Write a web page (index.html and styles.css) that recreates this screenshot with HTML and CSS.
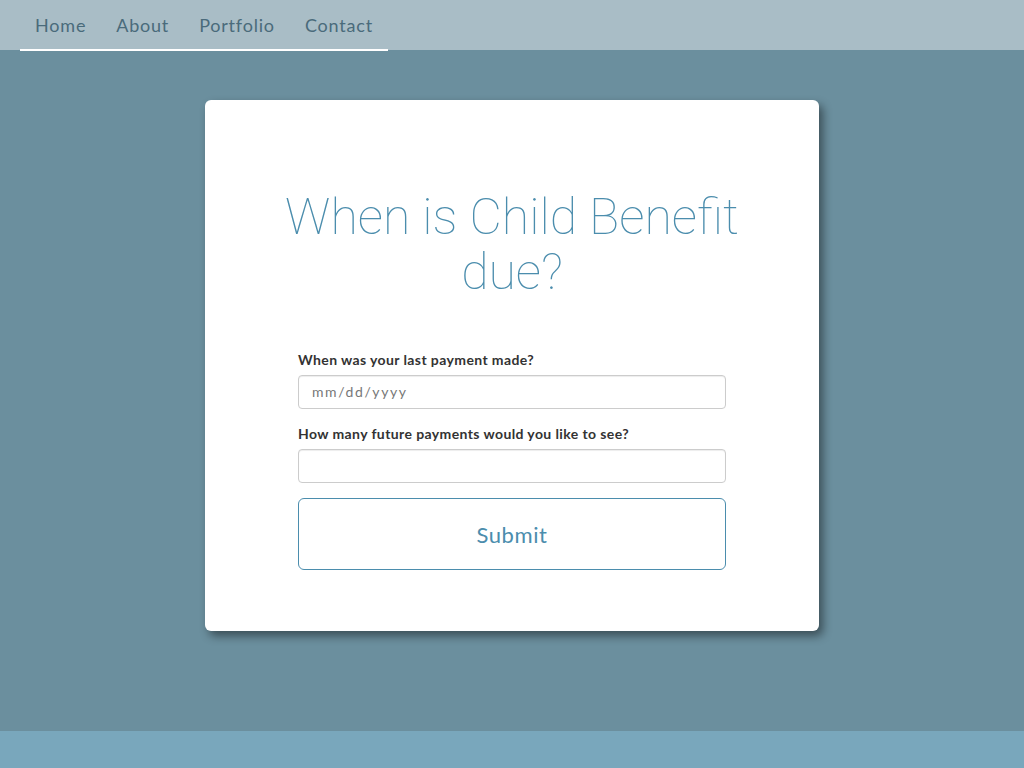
FILE: index.html
```html
<!DOCTYPE html>
<html lang="en">
<head>
<meta charset="utf-8">
<title>Child Benefit</title>
<link rel="stylesheet" href="styles.css">
</head>
<body>
<nav class="topnav">
  <ul class="nav-list">
    <li><a href="#">Home</a></li>
    <li><a href="#">About</a></li>
    <li><a href="#">Portfolio</a></li>
    <li><a href="#">Contact</a></li>
  </ul>
</nav>
<main class="main">
  <section class="card">
    <h1 class="title">When is Child Benefit due?</h1>
    <form class="form">
      <div class="form-group">
        <label class="label" for="last">When was your last payment made?</label>
        <div class="input date-input" id="last">mm/dd/yyyy</div>
      </div>
      <div class="form-group">
        <label class="label" for="count">How many future payments would you like to see?</label>
        <input class="input" id="count" type="text">
      </div>
      <button class="submit" type="button">Submit</button>
    </form>
  </section>
</main>
<footer class="footer"></footer>
</body>
</html>
```

FILE: styles.css
```css
* { box-sizing: border-box; }
html, body { margin: 0; padding: 0; }
body {
  background: #6b8f9e;
  font-family: "Lato", "Open Sans", sans-serif;
  color: #333;
  min-height: 768px;
  display: flex;
  flex-direction: column;
}
.topnav {
  height: 50px;
  background: #a9bdc6;
  padding-left: 20px;
}
.nav-list {
  list-style: none;
  margin: 0;
  padding: 0;
  display: inline-flex;
  border-bottom: 2px solid #ffffff;
  height: 51px;
}
.nav-list a {
  display: block;
  padding: 14px 15px;
  font-size: 18px;
  line-height: 22px;
  font-weight: 400;
  color: #4a6b7b;
  text-decoration: none;
  letter-spacing: 0.8px;
}
.main {
  flex: 1;
  padding: 50px 0 100px;
  display: flex;
  justify-content: center;
}
.card {
  width: 614px;
  height: 531px;
  background: #ffffff;
  border-radius: 6px;
  box-shadow: 4px 5px 10px rgba(0, 0, 0, 0.45);
  padding: 90px 40px 0;
}
.title {
  margin: 0 auto;
  width: 470px;
  text-align: center;
  font-family: "Roboto", sans-serif;
  font-weight: 100;
  font-size: 50px;
  line-height: 55px;
  color: #4b8dad;
}
.form {
  width: 428px;
  margin: 50px auto 0;
}
.form-group { margin-bottom: 15px; }
.label {
  display: block;
  font-size: 14px;
  line-height: 20px;
  font-weight: 700;
  color: #333;
  margin-bottom: 5px;
  letter-spacing: 0.4px;
}
.input {
  display: block;
  width: 100%;
  height: 34px;
  border: 1px solid #cccccc;
  border-radius: 4px;
  box-shadow: inset 0 1px 1px rgba(0,0,0,0.075);
  padding: 6px 13px;
  font-size: 14px;
  line-height: 20px;
  font-family: inherit;
  background: #fff;
}
.date-input { color: #777; letter-spacing: 1.6px; }
.submit {
  display: block;
  width: 100%;
  height: 72px;
  background: #fff;
  border: 1px solid #4b8dad;
  border-radius: 6px;
  color: #4b8dad;
  font-family: inherit;
  font-size: 22px;
  font-weight: 400;
  letter-spacing: 0.6px;
  margin-top: 15px;
}
.footer {
  height: 37px;
  background: #79a7bc;
}
```
